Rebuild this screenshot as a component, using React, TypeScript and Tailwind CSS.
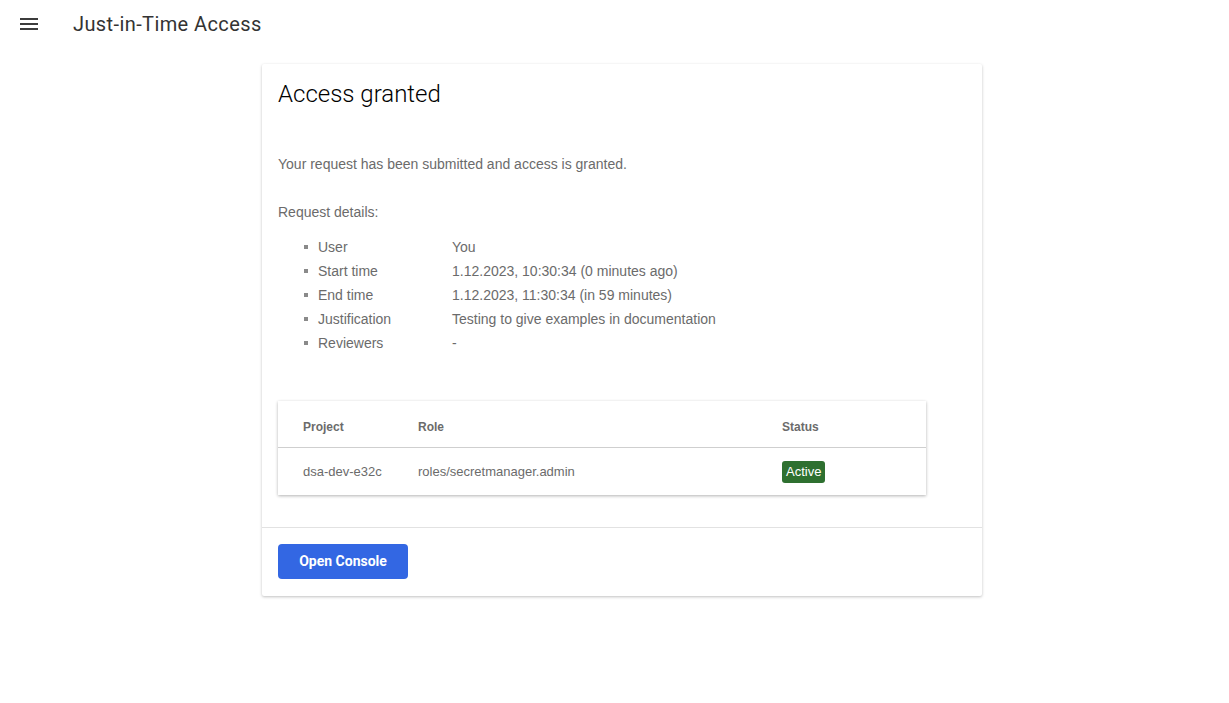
import React from "react";

export default function App() {
  const details: [string, string][] = [
    ["User", "You"],
    ["Start time", "1.12.2023, 10:30:34 (0 minutes ago)"],
    ["End time", "1.12.2023, 11:30:34 (in 59 minutes)"],
    ["Justification", "Testing to give examples in documentation"],
    ["Reviewers", "-"],
  ];
  return (
    <div className="min-h-[703px] w-full bg-white" style={{ fontFamily: "'Liberation Sans', Arial, sans-serif" }}>
      <header className="flex h-12 items-center">
        <div className="ml-[20px] flex w-[18px] flex-col gap-[3px]">
          <span className="block h-[2px] w-[18px] bg-[#3c3c3c]" />
          <span className="block h-[2px] w-[18px] bg-[#3c3c3c]" />
          <span className="block h-[2px] w-[18px] bg-[#3c3c3c]" />
        </div>
        <div className="ml-[35px] text-[20px] tracking-[0.4px] text-[#333]" style={{ fontFamily: "Roboto, sans-serif" }}>
          Just-in-Time Access
        </div>
      </header>
      <main className="flex justify-center pt-4 pl-[15px]">
        <div className="w-[720px] rounded-[2px] bg-white shadow-[0_1px_3px_rgba(0,0,0,0.25)]">
          <div className="px-4 pt-[16px] pb-[32px]">
            <h1 className="text-[24px] font-light leading-[28px] text-black" style={{ fontFamily: "Roboto, sans-serif" }}>
              Access granted
            </h1>
            <p className="mt-[46px] text-[14px] leading-[20px] text-[#6b6b6b]">
              Your request has been submitted and access is granted.
            </p>
            <p className="mt-[28px] text-[14px] leading-[20px] text-[#6b6b6b]">Request details:</p>
            <ul className="mt-[13px] text-[14px] text-[#6b6b6b]">
              {details.map(([k, v]) => (
                <li key={k} className="flex h-6 items-center">
                  <span className="ml-[26px] mr-[10px] block h-[4px] w-[4px] bg-[#8a8a8a]" />
                  <span className="w-[134px]">{k}</span>
                  <span>{v}</span>
                </li>
              ))}
            </ul>
            <div className="mt-[46px] w-[648px] bg-white shadow-[0_1px_3px_rgba(0,0,0,0.3)]">
              <div className="flex h-[47px] items-center border-b border-[#cfcfcf] pt-[6px] text-[12px] font-bold text-[#6b6b6b]">
                <span className="ml-[25px] w-[115px]">Project</span>
                <span className="w-[364px]">Role</span>
                <span>Status</span>
              </div>
              <div className="flex h-[47px] items-center text-[13px] text-[#6b6b6b]">
                <span className="ml-[25px] w-[115px]">dsa-dev-e32c</span>
                <span className="w-[364px]">roles/secretmanager.admin</span>
                <span className="rounded-[3px] bg-[#2e7030] px-[4px] py-[3px] text-[13px] leading-[16px] text-white">Active</span>
              </div>
            </div>
          </div>
          <div className="border-t border-[#e2e2e2] px-4 pt-[16px] pb-[17px]">
            <button
              className="h-[35px] w-[130px] rounded-[4px] bg-[#3367e3] text-[14px] font-bold text-white"
              style={{ fontFamily: "Roboto, sans-serif" }}
            >
              Open Console
            </button>
          </div>
        </div>
      </main>
    </div>
  );
}
